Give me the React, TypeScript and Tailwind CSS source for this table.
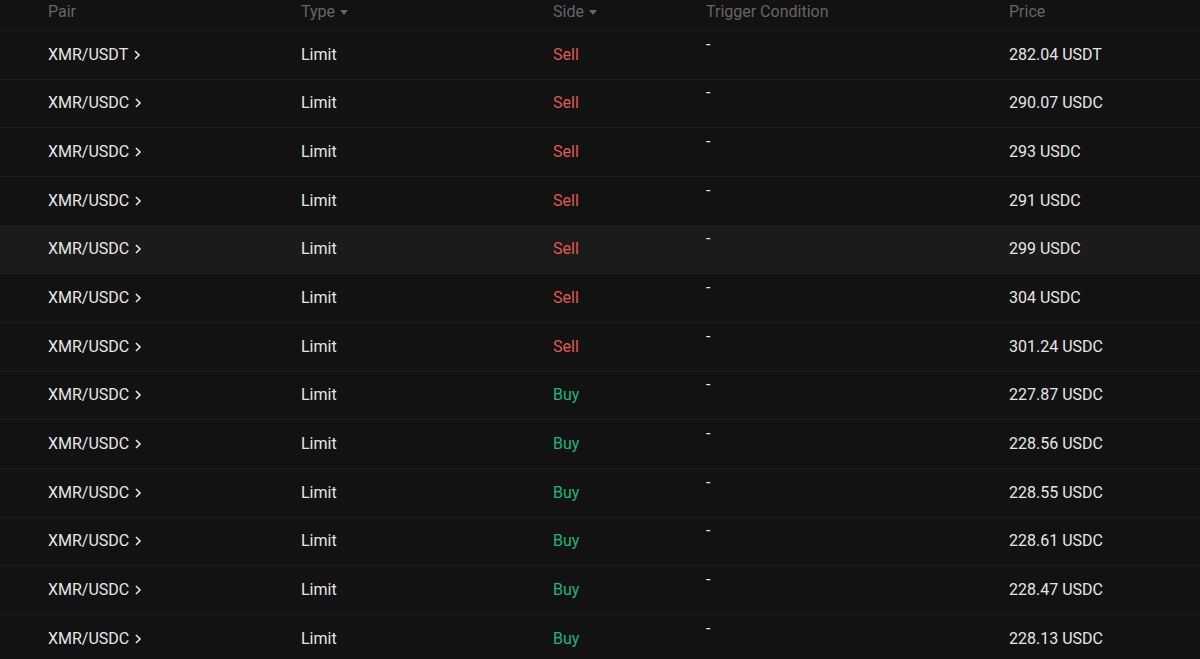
import React from "react";

type Order = {
  pair: string;
  side: "Sell" | "Buy";
  price: string;
};

const orders: Order[] = [
  { pair: "XMR/USDT", side: "Sell", price: "282.04 USDT" },
  { pair: "XMR/USDC", side: "Sell", price: "290.07 USDC" },
  { pair: "XMR/USDC", side: "Sell", price: "293 USDC" },
  { pair: "XMR/USDC", side: "Sell", price: "291 USDC" },
  { pair: "XMR/USDC", side: "Sell", price: "299 USDC" },
  { pair: "XMR/USDC", side: "Sell", price: "304 USDC" },
  { pair: "XMR/USDC", side: "Sell", price: "301.24 USDC" },
  { pair: "XMR/USDC", side: "Buy", price: "227.87 USDC" },
  { pair: "XMR/USDC", side: "Buy", price: "228.56 USDC" },
  { pair: "XMR/USDC", side: "Buy", price: "228.55 USDC" },
  { pair: "XMR/USDC", side: "Buy", price: "228.61 USDC" },
  { pair: "XMR/USDC", side: "Buy", price: "228.47 USDC" },
  { pair: "XMR/USDC", side: "Buy", price: "228.13 USDC" },
];

const HOVER_ROW = 4;

function Caret() {
  return (
    <svg width="8" height="5" viewBox="0 0 8 5" className="ml-[5px] mt-[1px]" aria-hidden>
      <path d="M0 0h8L4 5z" fill="#666" />
    </svg>
  );
}

function Chevron() {
  return (
    <svg width="8" height="12" viewBox="0 0 8 12" className="ml-[5px]" aria-hidden>
      <path d="M2 2l4 4-4 4" fill="none" stroke="#e6e6e6" strokeWidth="1.6" />
    </svg>
  );
}

// column template shared by header and rows
const cols = "grid grid-cols-[253px_252px_153px_303px_1fr] pl-[48px]";

export default function App() {
  return (
    <div
      className="h-[659px] w-[1200px] overflow-hidden bg-[#121212] text-[16px] text-[#e6e6e6]"
      style={{ fontFamily: "Roboto, 'Liberation Sans', sans-serif" }}
    >
      <div className={`${cols} h-[31px] items-start border-b border-[#1c1c1c] pt-[2px] leading-[20px] text-[#666]`}>
        <span>Pair</span>
        <span className="flex items-center">
          Type
          <Caret />
        </span>
        <span className="flex items-center">
          Side
          <Caret />
        </span>
        <span>Trigger Condition</span>
        <span>Price</span>
      </div>

      {orders.map((o, i) => (
        <div
          key={i}
          className={`${cols} h-[48.67px] items-center border-b border-[#1c1c1c] leading-[20px] ${
            i === HOVER_ROW ? "bg-[#1b1b1b]" : ""
          }`}
        >
          <span className="flex items-center">
            {o.pair}
            <Chevron />
          </span>
          <span>Limit</span>
          <span className={o.side === "Sell" ? "text-[#e05a4b]" : "text-[#1bb67e]"}>{o.side}</span>
          <span className="-mt-[20px] self-center">-</span>
          <span>{o.price}</span>
        </div>
      ))}
    </div>
  );
}
